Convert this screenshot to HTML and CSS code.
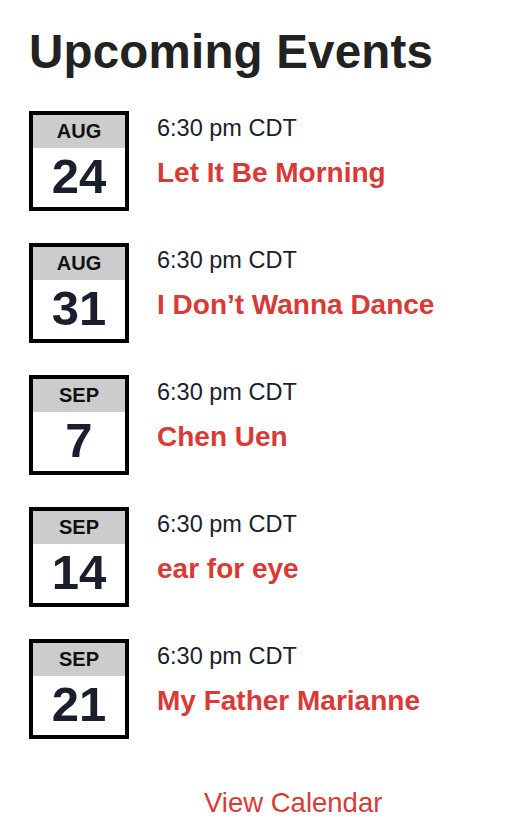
FILE: index.html
```html
<!DOCTYPE html>
<html>
<head>
	<title>Upcoming Events</title>
	<meta charset="utf-8">
	<link rel="stylesheet" href="styles.css">
</head>
<body>

	<div class="events">
		<h1 class="title">Upcoming Events</h1>

		<ul class="list">
			<li class="event">
				<div class="cal">
					<div class="month">AUG</div>
					<div class="day">24</div>
				</div>
				<div class="info">
					<p class="time">6:30 pm CDT</p>
					<a class="name" href="#">Let It Be Morning</a>
				</div>
			</li>
			<li class="event">
				<div class="cal">
					<div class="month">AUG</div>
					<div class="day">31</div>
				</div>
				<div class="info">
					<p class="time">6:30 pm CDT</p>
					<a class="name" href="#">I Don’t Wanna Dance</a>
				</div>
			</li>
			<li class="event">
				<div class="cal">
					<div class="month">SEP</div>
					<div class="day">7</div>
				</div>
				<div class="info">
					<p class="time">6:30 pm CDT</p>
					<a class="name" href="#">Chen Uen</a>
				</div>
			</li>
			<li class="event">
				<div class="cal">
					<div class="month">SEP</div>
					<div class="day">14</div>
				</div>
				<div class="info">
					<p class="time">6:30 pm CDT</p>
					<a class="name" href="#">ear for eye</a>
				</div>
			</li>
			<li class="event">
				<div class="cal">
					<div class="month">SEP</div>
					<div class="day">21</div>
				</div>
				<div class="info">
					<p class="time">6:30 pm CDT</p>
					<a class="name" href="#">My Father Marianne</a>
				</div>
			</li>
		</ul>

		<a class="more" href="#">View Calendar</a>
	</div>

</body>
</html>
```

FILE: styles.css
```css
* {
	box-sizing: border-box;
}

body {
	margin: 0;
	background: #fff;
	font-family: "Liberation Sans", Arial, sans-serif;
	color: #1b1e2c;
}

.events {
	padding: 25px 30px 0 29px;
}

.title {
	margin: 0;
	font-size: 47.5px;
	line-height: 54px;
	font-weight: 700;
	color: #222;
	letter-spacing: 0.2px;
}

.list {
	list-style: none;
	margin: 32px 0 0 0;
	padding: 0;
	display: flex;
	flex-direction: column;
	gap: 32px;
}

.event {
	display: flex;
	gap: 28px;
}

.cal {
	width: 100px;
	height: 100px;
	flex: none;
	border: 4px solid #000;
	text-align: center;
}

.month {
	height: 33px;
	line-height: 33px;
	background: #cccccc;
	font-size: 20px;
	font-weight: 700;
	color: #111;
}

.day {
	padding-top: 2px;
	font-size: 49px;
	line-height: 52px;
	font-weight: 700;
	color: #1b1e2c;
}

.info {
	padding-top: 3px;
}

.time {
	margin: 0;
	font-size: 23.5px;
	line-height: 28px;
}

.name {
	display: block;
	margin-top: 14px;
	font-size: 28px;
	line-height: 34px;
	font-weight: 700;
	color: #d93a35;
	text-decoration: none;
}

.more {
	display: block;
	margin: 48px 0 0 175px;
	font-size: 27.5px;
	line-height: 32px;
	color: #d93a35;
	text-decoration: none;
}
```
